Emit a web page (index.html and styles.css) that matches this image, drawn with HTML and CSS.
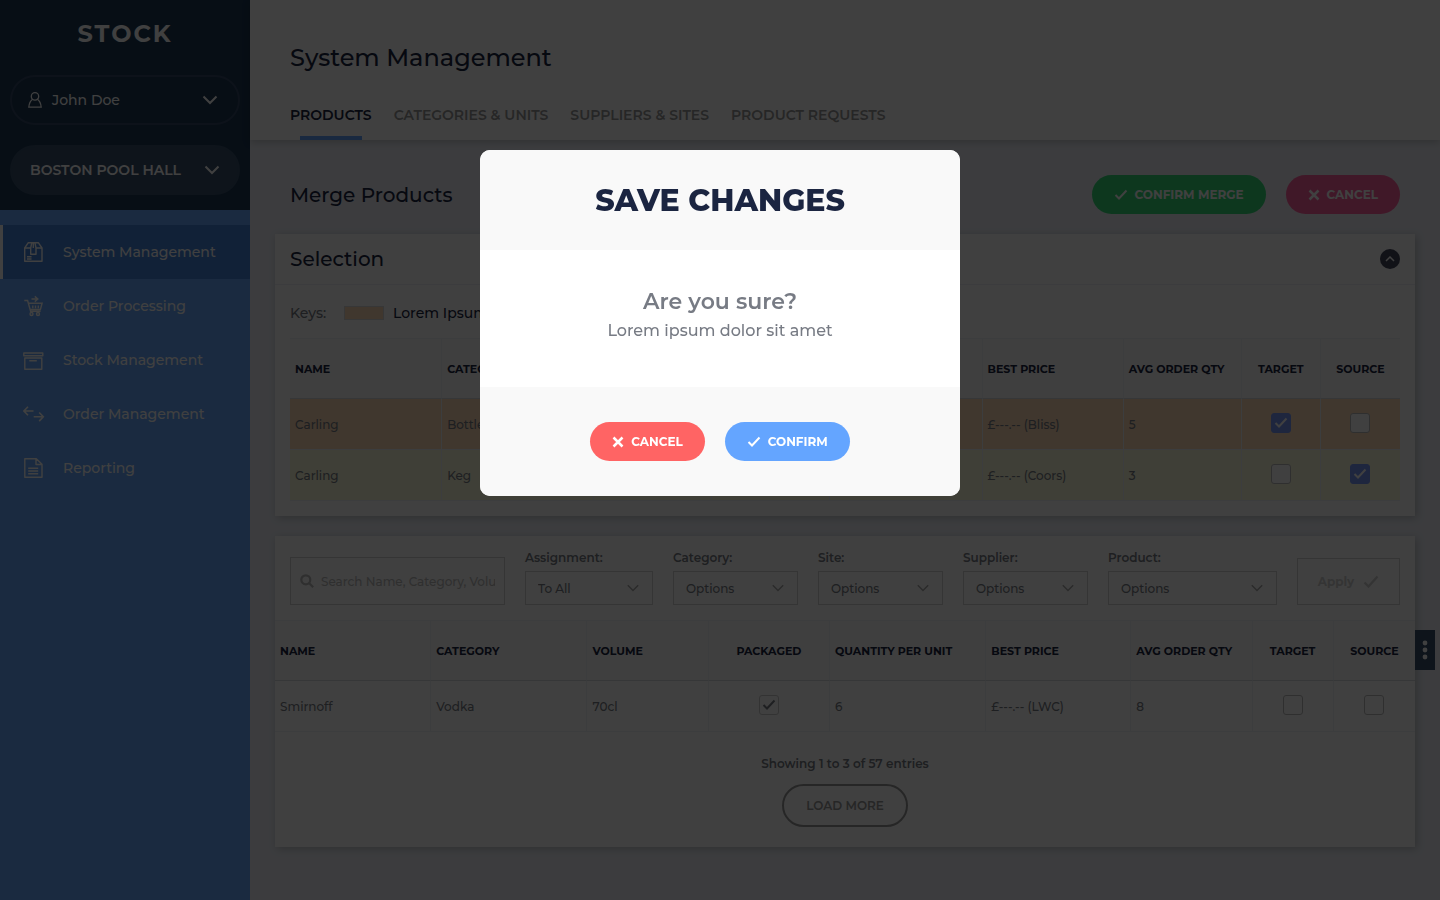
FILE: index.html
```html
<!DOCTYPE html>
<html lang="en">
<head>
  <meta charset="UTF-8">
  <meta name="viewport" content="width=device-width, initial-scale=1.0">
  <title>Stock - System Management</title>
  <link rel="stylesheet" href="styles.css">
</head>
<body>
  <div class="layout">
    <!-- Sidebar -->
    <aside class="sidebar">
      <div class="sidebar-top">
        <div class="logo">STOCK</div>
        <button type="button" class="pill pill-user">
          <svg class="icon-user" width="14" height="16" viewBox="0 0 14 16" fill="none" stroke="currentColor" stroke-width="1.3"><path d="M4.6 7.2C2.2 8.8 1.1 11.5.8 15.2h12.4C12.9 11.5 11.8 8.8 9.4 7.2"/><circle cx="7" cy="4.4" r="3.7"/></svg>
          <span>John Doe</span>
          <svg class="chevron" width="16" height="10" viewBox="0 0 16 10" fill="none" stroke="currentColor" stroke-width="2"><path d="M1.5 1.5 8 8l6.5-6.5"/></svg>
        </button>
        <button type="button" class="pill pill-site">
          <span>BOSTON POOL HALL</span>
          <svg class="chevron" width="16" height="10" viewBox="0 0 16 10" fill="none" stroke="currentColor" stroke-width="2"><path d="M1.5 1.5 8 8l6.5-6.5"/></svg>
        </button>
      </div>
      <nav class="nav">
        <a href="#" class="nav-link active">
          <svg width="22" height="22" viewBox="0 0 22 22" fill="none" stroke="currentColor" stroke-width="1.4" stroke-linejoin="round"><path d="M1.7 7 5.3 1.7h10L19 7v13.3H1.7z"/><path d="M1.7 7h6M13 7h6M8.8 1.7 7.7 7v6.3H13V7l-1.1-5.3M10.3 1.7V7M4 15.8h4.500M4 18h4.500"/></svg>
          <span>System Management</span>
        </a>
        <a href="#" class="nav-link">
          <svg width="22" height="22" viewBox="0 0 22 22" fill="none" stroke="currentColor" stroke-width="1.4"><path d="M1.3 5.5h3.300L7.600 16.300h10M5.400 8.300h13.700l-1.700 6.200H7.100M9.800 10.500v2.800M12.500 10.500v2.800M15.300 10.500v2.800"/><path d="M8.500 4h6M11.800 1.400 14.800 4l-3 2.600"/><circle cx="8.500" cy="19" r="1.500"/><circle cx="15" cy="19" r="1.500"/></svg>
          <span>Order Processing</span>
        </a>
        <a href="#" class="nav-link">
          <svg width="22" height="22" viewBox="0 0 22 22" fill="none" stroke="currentColor" stroke-width="1.4" stroke-linejoin="round"><path d="M.8 4h19v2.700h-19zM1.800 9h17v11.200h-17zM6.300 11.700h7.500"/></svg>
          <span>Stock Management</span>
        </a>
        <a href="#" class="nav-link">
          <svg width="22" height="22" viewBox="0 0 22 22" fill="none" stroke="currentColor" stroke-width="1.6"><path d="M10.500 8H1.200M5 3.700.9 8 5 12.300M10.700 13.800h9.300M16.200 9.500l4.100 4.300-4.100 4.300"/></svg>
          <span>Order Management</span>
        </a>
        <a href="#" class="nav-link">
          <svg width="22" height="22" viewBox="0 0 22 22" fill="none" stroke="currentColor" stroke-width="1.4" stroke-linejoin="round"><path d="M1.800 1.700h11.500L19 7.200v13.100H1.800zM13 1.700v5.800h6M5.200 11.300h10M5.200 14h10M5.200 16.700h10"/></svg>
          <span>Reporting</span>
        </a>
      </nav>
    </aside>

    <!-- Page -->
    <main class="page">
      <header class="page-header">
        <h1>System Management</h1>
        <nav class="tabs">
          <a href="#" class="active">PRODUCTS</a>
          <a href="#">CATEGORIES &amp; UNITS</a>
          <a href="#">SUPPLIERS &amp; SITES</a>
          <a href="#">PRODUCT REQUESTS</a>
        </nav>
      </header>

      <div class="content">
        <div class="title-row">
          <h2>Merge Products</h2>
          <div class="title-actions">
            <button type="button" class="btn btn-green">
              <svg width="14" height="12" viewBox="0 0 14 12" fill="none" stroke="currentColor" stroke-width="2"><path d="m1.500 6 3.500 3.500 7.500-8"/></svg>
              CONFIRM MERGE
            </button>
            <button type="button" class="btn btn-pink">
              <svg width="12" height="12" viewBox="0 0 12 12" fill="none" stroke="currentColor" stroke-width="2.5"><path d="m1.500 1.500 9 9M10.500 1.500l-9 9"/></svg>
              CANCEL
            </button>
          </div>
        </div>

        <!-- Selection -->
        <section class="card">
          <div class="card-header">
            <h2>Selection</h2>
            <button type="button" class="collapse" aria-label="Collapse selection">
              <svg width="10" height="6" viewBox="0 0 10 6" fill="none" stroke="currentColor" stroke-width="1.5"><path d="m1 5 4-4 4 4"/></svg>
            </button>
          </div>
          <div class="keys">
            <span class="keys-label">Keys:</span>
            <span class="swatch"></span>
            <span class="keys-name">Lorem Ipsum</span>
          </div>
          <div class="table-wrap">
            <table>
              <colgroup>
                <col class="col-name"><col class="col-name"><col class="col-mid"><col class="col-mid"><col class="col-name"><col class="col-price"><col class="col-mid"><col class="col-check"><col class="col-check">
              </colgroup>
              <thead>
                <tr>
                  <th>NAME</th>
                  <th>CATEGORY</th>
                  <th>VOLUME</th>
                  <th class="center">PACKAGED</th>
                  <th>QUANTITY PER UNIT</th>
                  <th>BEST PRICE</th>
                  <th>AVG ORDER QTY</th>
                  <th class="center">TARGET</th>
                  <th class="center">SOURCE</th>
                </tr>
              </thead>
              <tbody>
                <tr class="row-target">
                  <td>Carling</td>
                  <td>Bottle</td>
                  <td></td>
                  <td></td>
                  <td></td>
                  <td>£---.-- (Bliss)</td>
                  <td>5</td>
                  <td class="center"><input type="checkbox" aria-label="Target Carling Bottle" checked></td>
                  <td class="center"><input type="checkbox" aria-label="Source Carling Bottle"></td>
                </tr>
                <tr class="row-source">
                  <td>Carling</td>
                  <td>Keg</td>
                  <td></td>
                  <td></td>
                  <td></td>
                  <td>£---.-- (Coors)</td>
                  <td>3</td>
                  <td class="center"><input type="checkbox" aria-label="Target Carling Keg"></td>
                  <td class="center"><input type="checkbox" aria-label="Source Carling Keg" checked></td>
                </tr>
              </tbody>
            </table>
          </div>
        </section>

        <!-- Product list -->
        <section class="card">
          <form class="filters">
            <div class="search">
              <svg width="14" height="14" viewBox="0 0 14 14" fill="none" stroke="currentColor" stroke-width="2.2"><circle cx="5.8" cy="5.8" r="4.5"/><path d="m9 9 4.200 4.200"/></svg>
              <input type="text" aria-label="Search" placeholder="Search Name, Category, Volume">
            </div>
            <div class="field">
              <label for="assignment">Assignment:</label>
              <select id="assignment"><option>To All</option></select>
            </div>
            <div class="field">
              <label for="category">Category:</label>
              <select id="category"><option>Options</option></select>
            </div>
            <div class="field">
              <label for="site">Site:</label>
              <select id="site"><option>Options</option></select>
            </div>
            <div class="field">
              <label for="supplier">Supplier:</label>
              <select id="supplier"><option>Options</option></select>
            </div>
            <div class="field">
              <label for="product">Product:</label>
              <select id="product"><option>Options</option></select>
            </div>
            <button type="button" class="apply">
              Apply
              <svg width="16" height="14" viewBox="0 0 16 14" fill="none" stroke="currentColor" stroke-width="2.4"><path d="m1.500 7.500 4 4 9-10"/></svg>
            </button>
          </form>
          <table>
            <colgroup>
              <col class="col-name"><col class="col-name"><col class="col-mid"><col class="col-mid"><col class="col-name"><col class="col-price"><col class="col-mid"><col class="col-check"><col class="col-check">
            </colgroup>
            <thead>
              <tr>
                <th>NAME</th>
                <th>CATEGORY</th>
                <th>VOLUME</th>
                <th class="center">PACKAGED</th>
                <th>QUANTITY PER UNIT</th>
                <th>BEST PRICE</th>
                <th>AVG ORDER QTY</th>
                <th class="center">TARGET</th>
                <th class="center">SOURCE</th>
              </tr>
            </thead>
            <tbody>
              <tr>
                <td>Smirnoff</td>
                <td>Vodka</td>
                <td>70cl</td>
                <td class="center"><input type="checkbox" class="readonly" aria-label="Packaged" checked disabled></td>
                <td>6</td>
                <td>£---.-- (LWC)</td>
                <td>8</td>
                <td class="center"><input type="checkbox" aria-label="Target Smirnoff"></td>
                <td class="center"><input type="checkbox" aria-label="Source Smirnoff"></td>
              </tr>
            </tbody>
          </table>
          <div class="card-footer">
            <p>Showing 1 to 3 of 57 entries</p>
            <button type="button" class="load-more">LOAD MORE</button>
          </div>
          <button type="button" class="side-menu" aria-label="More">
            <svg width="6" height="20" viewBox="0 0 6 20" fill="currentColor"><circle cx="3" cy="3" r="2.4"/><circle cx="3" cy="10" r="2.4"/><circle cx="3" cy="17" r="2.4"/></svg>
          </button>
        </section>
      </div>
    </main>
  </div>

  <!-- Modal -->
  <div class="overlay">
    <div class="modal" role="dialog" aria-modal="true" aria-labelledby="modal-title">
      <div class="modal-header">
        <h2 id="modal-title">SAVE CHANGES</h2>
      </div>
      <div class="modal-body">
        <h3>Are you sure?</h3>
        <p>Lorem ipsum dolor sit amet</p>
      </div>
      <div class="modal-footer">
        <button type="button" class="btn btn-red">
          <svg width="12" height="12" viewBox="0 0 12 12" fill="none" stroke="currentColor" stroke-width="2.5"><path d="m1.500 1.500 9 9M10.500 1.500l-9 9"/></svg>
          CANCEL
        </button>
        <button type="button" class="btn btn-blue">
          <svg width="14" height="12" viewBox="0 0 14 12" fill="none" stroke="currentColor" stroke-width="2"><path d="m1.500 6 3.500 3.500 7.500-8"/></svg>
          CONFIRM
        </button>
      </div>
    </div>
  </div>
</body>
</html>
```

FILE: styles.css
```css
* {
  box-sizing: border-box;
}
body {
  margin: 0;
  font-family: Montserrat, Inter, "Open Sans", sans-serif;
  font-size: 14px;
  color: #1b2541;
  background-color: #edf0f7;
}
h1, h2, h3, p {
  margin: 0;
}
a {
  text-decoration: none;
}
button, input, select {
  font-family: inherit;
}
button {
  cursor: pointer;
}
.layout {
  display: flex;
  min-height: 100vh;
}

/* Sidebar */
.sidebar {
  width: 250px;
  flex-shrink: 0;
  background-color: #68a8ff;
  color: #fff;
}
.sidebar-top {
  display: flex;
  flex-direction: column;
  gap: 20px;
  padding: 13px 10px 15px;
  background-color: #1c3854;
}
.logo {
  height: 42px;
  line-height: 42px;
  font-size: 24px;
  font-weight: 700;
  letter-spacing: 2px;
  text-align: center;
}
.pill {
  display: flex;
  align-items: center;
  height: 50px;
  border: 2px solid #344a68;
  border-radius: 25px;
  color: #fff;
  font-size: 14px;
  font-weight: 500;
  background: none;
}
.pill .chevron {
  margin-left: auto;
}
.pill-user {
  gap: 10px;
  padding: 0 20px 0 16px;
}
.pill-site {
  padding: 0 18px;
  font-weight: 600;
  background-color: #38506c;
  border-color: #38506c;
}
.nav {
  padding-top: 15px;
}
.nav-link {
  display: flex;
  align-items: center;
  gap: 18px;
  height: 54px;
  padding-left: 20px;
  border-left: 3px solid transparent;
  color: #fff;
  font-weight: 500;
}
.nav-link.active {
  background-color: #4484dc;
  border-left-color: #fff;
}

/* Page header */
.page {
  flex: 1;
  min-width: 0;
}
.page-header {
  position: relative;
  height: 140px;
  padding: 42px 40px 0;
  background-color: #fff;
  box-shadow: 0 2px 8px rgba(0, 0, 0, 0.2);
}
.page-header h1 {
  font-size: 24px;
  line-height: 32px;
  font-weight: 500;
}
.tabs {
  display: flex;
  gap: 22px;
  margin-top: 16px;
}
.tabs a {
  position: relative;
  height: 50px;
  line-height: 50px;
  font-weight: 600;
  color: #999;
}
.tabs a.active {
  color: #1b2541;
}
.tabs a.active::after {
  content: "";
  position: absolute;
  left: 10px;
  right: 10px;
  bottom: 0;
  height: 4px;
  background-color: #64a5ff;
}

/* Content */
.content {
  padding: 35px 25px 50px;
}
.title-row {
  display: flex;
  justify-content: space-between;
  align-items: center;
  padding: 0 15px;
  margin-bottom: 20px;
}
h2 {
  font-size: 20px;
  font-weight: 500;
}
.title-actions {
  display: flex;
  gap: 20px;
}
.btn {
  display: flex;
  align-items: center;
  gap: 7px;
  height: 39px;
  padding: 0 22px;
  border: none;
  border-radius: 20px;
  color: #fff;
  font-size: 12px;
  font-weight: 700;
}
.btn-green {
  background-color: #34dc78;
}
.btn-pink {
  background-color: #ff60a0;
}
.btn-red {
  background-color: #ff6464;
}
.btn-blue {
  background-color: #64a5ff;
}

.card {
  position: relative;
  margin-bottom: 20px;
  background-color: #fff;
  box-shadow: 2px 2px 8px rgba(0, 0, 0, 0.2);
}
.card-header {
  display: flex;
  justify-content: space-between;
  align-items: center;
  height: 51px;
  padding: 0 15px;
  border-bottom: 1px solid #edf0f5;
}
.collapse {
  display: flex;
  align-items: center;
  justify-content: center;
  width: 20px;
  height: 20px;
  padding: 0;
  border: none;
  border-radius: 50%;
  color: #fff;
  background-color: #44485c;
}
.keys {
  display: flex;
  align-items: center;
  height: 53px;
  padding: 3px 15px 0;
  font-weight: 500;
}
.keys-label {
  width: 54px;
  color: #777b84;
}
.swatch {
  width: 40px;
  height: 14px;
  margin-right: 9px;
  border: 1px solid #dcdcdc;
  background-color: #ffdcb8;
}

/* Tables */
.table-wrap {
  padding: 0 15px 15px;
}
table {
  width: 100%;
  table-layout: fixed;
  border-collapse: separate;
  border-spacing: 0;
}
.col-name {
  width: 152px;
}
.col-mid {
  width: 118px;
}
.col-price {
  width: 141px;
}
.col-check {
  width: 79px;
}
th, td {
  padding: 0 5px;
  text-align: left;
  border-right: 1px solid #f0f2f5;
  white-space: nowrap;
}
th:last-child, td:last-child {
  border-right: none;
}
th {
  height: 61px;
  font-size: 11px;
  font-weight: 700;
  background-color: #f9f9f9;
  border-top: 1px solid #f0f2f5;
  border-bottom: 1px solid #d8dce0;
}
td {
  height: 51px;
  font-size: 12px;
  font-weight: 500;
  color: #777b84;
  border-bottom: 1px solid #f0f2f5;
}
.center {
  text-align: center;
}
.row-target td {
  background-color: #ffdcb8;
}
.row-source td {
  background-color: #fcfcdc;
}
input[type="checkbox"] {
  appearance: none;
  width: 20px;
  height: 20px;
  margin: 0 0 2px;
  vertical-align: middle;
  border: 1px solid #bbb;
  border-radius: 3px;
  background: #fff center / 14px 12px no-repeat;
}
input[type="checkbox"]:checked {
  border-color: #7898f8;
  background-color: #7898f8;
  background-image: url("data:image/svg+xml,%3Csvg xmlns='http://www.w3.org/2000/svg' viewBox='0 0 14 12' fill='none' stroke='white' stroke-width='2'%3E%3Cpath d='m1.500 6 3.500 3.500 7.500-8'/%3E%3C/svg%3E");
}
input[type="checkbox"].readonly:checked {
  border-color: #ccc;
  background-color: #fff;
  background-image: url("data:image/svg+xml,%3Csvg xmlns='http://www.w3.org/2000/svg' viewBox='0 0 14 12' fill='none' stroke='%23777b84' stroke-width='2'%3E%3Cpath d='m1.500 6 3.500 3.500 7.500-8'/%3E%3C/svg%3E");
}

/* Filters */
.filters {
  display: grid;
  grid-template-columns: 215fr 128fr 125fr 125fr 125fr 169fr 103fr;
  gap: 20px;
  align-items: end;
  padding: 14px 15px 15px;
}
.search {
  display: flex;
  align-items: center;
  gap: 7px;
  min-width: 0;
  height: 48px;
  padding: 0 9px;
  border: 1px solid #d4d4d4;
  color: #bbb;
}
.search svg {
  flex-shrink: 0;
}
.search input {
  flex: 1;
  min-width: 0;
  padding: 0;
  border: none;
  outline: none;
  background: none;
  font-size: 12px;
  font-weight: 500;
}
.search input::placeholder {
  color: #bbb;
}
.field {
  display: flex;
  flex-direction: column;
  min-width: 0;
}
.field label {
  height: 21px;
  line-height: 16px;
  font-size: 12px;
  font-weight: 600;
  color: #777b84;
}
.field select {
  appearance: none;
  width: 100%;
  height: 34px;
  padding: 0 12px;
  border: 1px solid #d4d4d4;
  border-radius: 0;
  color: #777b84;
  font-size: 12px;
  font-weight: 500;
  background: #fff url("data:image/svg+xml,%3Csvg xmlns='http://www.w3.org/2000/svg' viewBox='0 0 12 8' fill='none' stroke='%23aaa' stroke-width='1.500'%3E%3Cpath d='m.8 1.200 5.200 5.300 5.200-5.300'/%3E%3C/svg%3E") right 13px center / 12px 8px no-repeat;
}
.apply {
  display: flex;
  align-items: center;
  justify-content: center;
  gap: 9px;
  height: 47px;
  padding: 0;
  border: 1px solid #d4d4d4;
  background: none;
  color: #d0d0d0;
  font-size: 12px;
  font-weight: 700;
}
.card-footer {
  display: flex;
  flex-direction: column;
  align-items: center;
  gap: 12px;
  padding: 24px 15px 20px;
}
.card-footer p {
  font-size: 12px;
  line-height: 16px;
  font-weight: 600;
  color: #777b84;
}
.load-more {
  height: 43px;
  padding: 0 22px;
  border: 2px solid #999;
  border-radius: 22px;
  background: none;
  color: #999;
  font-size: 12px;
  font-weight: 600;
}
.side-menu {
  position: absolute;
  top: 94px;
  left: 100%;
  display: flex;
  align-items: center;
  justify-content: center;
  width: 20px;
  height: 40px;
  padding: 0;
  border: none;
  color: #fff;
  background-color: #38506c;
}

/* Modal */
.overlay {
  position: fixed;
  inset: 0;
  z-index: 100;
  display: flex;
  justify-content: center;
  align-items: flex-start;
  padding-top: 150px;
  background-color: rgba(0, 0, 0, 0.75);
}
.modal {
  width: 480px;
  border-radius: 10px;
  overflow: hidden;
  background-color: #fff;
  text-align: center;
}
.modal-header {
  padding: 31px 30px 29px;
  background-color: #f9f9f9;
}
.modal-header h2 {
  font-size: 30px;
  line-height: 40px;
  font-weight: 800;
}
.modal-body {
  padding: 36px 35px 43px;
  color: #777b84;
}
.modal-body h3 {
  font-size: 22px;
  line-height: 32px;
  font-weight: 600;
}
.modal-body p {
  font-size: 16px;
  line-height: 26px;
  font-weight: 500;
}
.modal-footer {
  display: flex;
  justify-content: center;
  gap: 20px;
  padding: 35px;
  background-color: #f9f9f9;
}
```
